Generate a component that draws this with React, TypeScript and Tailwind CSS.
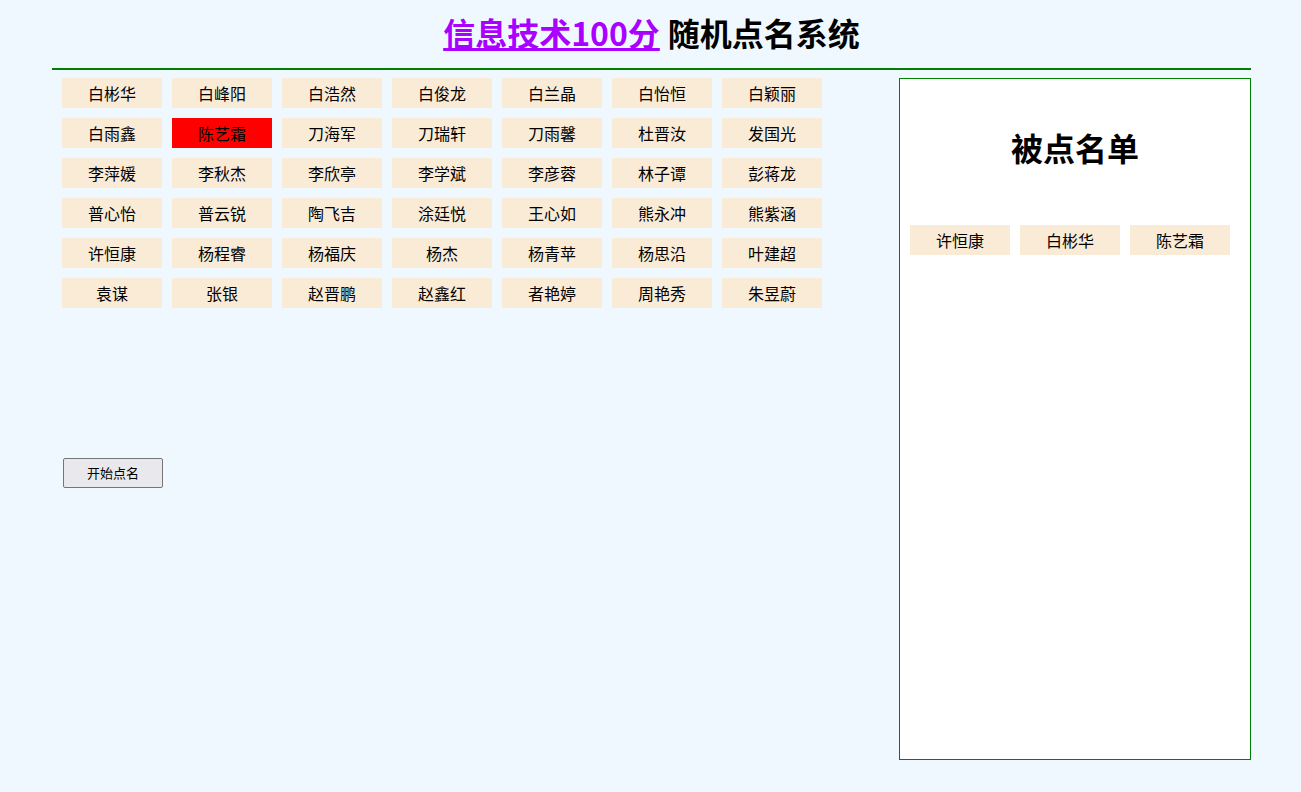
const names = [
  '白彬华', '白峰阳', '白浩然', '白俊龙', '白兰晶', '白怡恒', '白颖丽',
  '白雨鑫', '陈艺霜', '刀海军', '刀瑞轩', '刀雨馨', '杜晋汝', '发国光',
  '李萍媛', '李秋杰', '李欣亭', '李学斌', '李彦蓉', '林子谭', '彭蒋龙',
  '普心怡', '普云锐', '陶飞吉', '涂廷悦', '王心如', '熊永冲', '熊紫涵',
  '许恒康', '杨程睿', '杨福庆', '杨杰', '杨青苹', '杨思沿', '叶建超',
  '袁谋', '张银', '赵晋鹏', '赵鑫红', '者艳婷', '周艳秀', '朱昱蔚',
];

const picked = ['许恒康', '白彬华', '陈艺霜'];

export default function App() {
  return (
    <div className="min-h-[792px] bg-[#f0f8ff] text-black" style={{ fontFamily: '"Microsoft YaHei", "Noto Sans CJK SC", sans-serif' }}>
      <div className="mx-[52px] w-[1199px]">
        <h1 className="h-[70px] flex items-center justify-center text-[32px] font-bold border-b-2 border-[#008000] leading-none pb-1">
          <a href="#" className="text-[#aa00ff] underline">信息技术100分</a>
          <span className="ml-2">随机点名系统</span>
        </h1>
        <div className="flex justify-between pt-2">
          <div className="pl-[10px]">
            <div className="grid grid-cols-[repeat(7,100px)] gap-x-[10px] gap-y-[10px]">
              {names.map((n) => (
                <div
                  key={n}
                  className={`h-[30px] flex items-center justify-center text-[16px] ${n === '陈艺霜' ? 'bg-[#ff0000]' : 'bg-[#faebd7]'}`}
                >
                  {n}
                </div>
              ))}
            </div>
            <button className="mt-[150px] ml-px w-[100px] h-[30px] border border-[#767676] rounded-[2px] bg-[#e9e9ed] text-[13px]">
              开始点名
            </button>
          </div>
          <div className="w-[352px] h-[682px] bg-white border border-[#008000] px-[10px]">
            <h2 className="text-[32px] font-bold text-center mt-[52px] leading-none">被点名单</h2>
            <div className="flex gap-[10px] mt-[62px]">
              {picked.map((n) => (
                <div key={n} className="w-[100px] h-[30px] flex items-center justify-center bg-[#faebd7] text-[16px]">
                  {n}
                </div>
              ))}
            </div>
          </div>
        </div>
      </div>
    </div>
  );
}
